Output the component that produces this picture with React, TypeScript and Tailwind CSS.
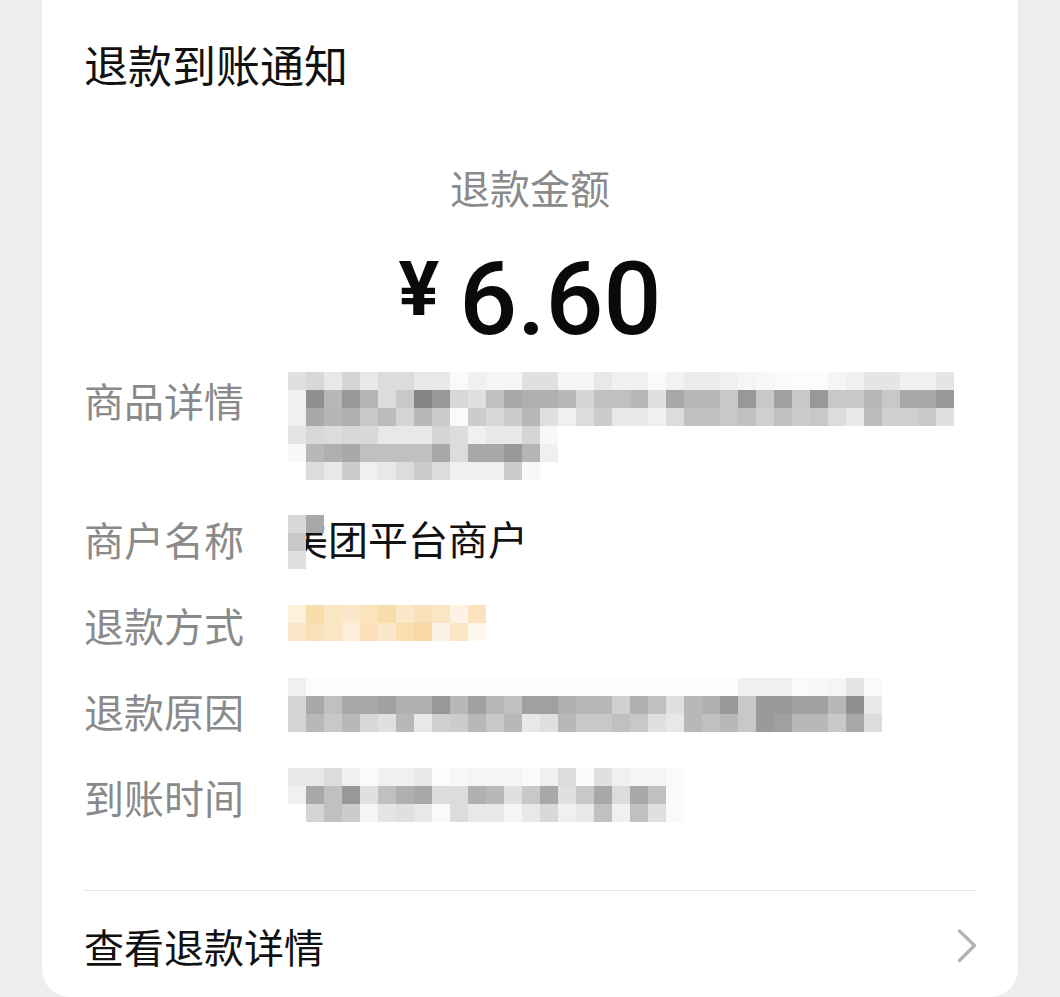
import React from 'react'

// gray levels of the pixelated (blurred) values, 18px cells
type Cell = number | string | null

const productRows: Cell[][] = [
  [0xe0, 0xd8, 0xe8, 0xd5, 0xe8, 0xdc, 0xdc, 0xe8, 0xe8, 0xfa, 0xf0, 0xf5, 0xf5, 0xe0, 0xe0, 0xf5, 0xf5, 0xe8, 0xf0, 0xf0, 0xfa, 0xf2, 0xec, 0xec, 0xf0, 0xf5, 0xf8, 0xfa, 0xfc, 0xfc, 0xf5, 0xf0, 0xe5, 0xe5, 0xf0, 0xf0, 0xe5],
  [0xf0, 0x90, 0xb8, 0x98, 0xb5, 0xdc, 0xc8, 0x85, 0x98, 0xd8, 0xe0, 0xc0, 0xa8, 0xb0, 0xb0, 0xb8, 0xd5, 0xc0, 0xc0, 0xb8, 0xe0, 0xa8, 0xb8, 0xb8, 0xc8, 0x98, 0xc8, 0xa0, 0xc8, 0x98, 0xc8, 0xc8, 0xb8, 0xc8, 0xa8, 0xa8, 0x9a],
  [0xf0, 0xa8, 0xb5, 0xb0, 0xc8, 0xbc, 0xd5, 0xb8, 0xcc, 0xfa, 0xcc, 0xd8, 0xcc, 0xb8, 0xe0, 0xf0, 0xdc, 0xcc, 0xe8, 0xe8, 0xf0, 0xdc, 0xc0, 0xc0, 0xc8, 0xc0, 0xd0, 0xc0, 0xcc, 0xc8, 0xdc, 0xe8, 0xbc, 0xd0, 0xd0, 0xc8, 0xe0],
  [0xe4, 0xd8, 0xdc, 0xd8, 0xd8, 0xe8, 0xe8, 0xe8, 0xd5, 0xdc, 0xf0, 0xe8, 0xe8, 0xd5, 0xf8],
  [0xf8, 0xb8, 0xb0, 0xa8, 0xc0, 0xc0, 0xc0, 0xc0, 0xa8, 0xdc, 0xa8, 0xa8, 0x9a, 0xb5, 0xf0],
  [null, 0xdc, 0xe8, 0xcc, 0xf0, 0xe8, 0xdc, 0xcc, 0xdc, 0xf0, 0xf0, 0xf0, 0xcc, 0xf8],
]

const methodRows: Cell[][] = [
  ['#fdf0dc', '#f8dcaa', '#fbe6c4', '#fbe8cc', '#fbe3bd', '#f8dcaa', '#fbe8c8', '#f9e0b8', '#fbe6c4', '#fdf3e4', '#fbe3bd'],
  ['#fbe8c8', '#f9e0b8', '#fbe6c4', '#fdeed8', '#f9e0b8', '#fbe8c8', '#f9deb0', '#f8d8a4', '#fdf3e4', '#fbe6c4', '#fef8ee'],
]

const reasonRows: Cell[][] = [
  [0xf0, 0xfc, 0xfc, 0xfc, 0xfc, 0xfc, 0xfc, 0xfc, 0xfc, 0xfc, 0xfc, 0xfc, 0xfc, 0xfc, 0xfc, 0xfc, 0xfc, 0xfc, 0xfc, 0xfc, 0xfc, 0xfc, 0xfc, 0xfc, 0xfc, 0xf0, 0xf0, 0xf0, 0xfa, 0xf8, 0xf5, 0xe5, 0xfa],
  [0xd5, 0xa8, 0xc0, 0xa8, 0xa8, 0xa0, 0xb0, 0xb0, 0x98, 0xb8, 0xa0, 0xb8, 0xc0, 0xa0, 0xa0, 0xb0, 0xb8, 0xb8, 0xd0, 0xb0, 0xc0, 0xe0, 0xb8, 0xb0, 0x98, 0xc8, 0x9a, 0x9a, 0xa0, 0xa0, 0xb8, 0x90, 0xe8],
  [0xd5, 0xb8, 0xc8, 0xb8, 0xd8, 0xe0, 0xb8, 0xe8, 0xd0, 0xcc, 0xb8, 0xc8, 0xb8, 0xe8, 0xe0, 0xb8, 0xc8, 0xc8, 0xc0, 0xc8, 0xe0, 0xe8, 0xb8, 0xc0, 0xb8, 0xc8, 0x9a, 0xa0, 0xb8, 0xb8, 0xc8, 0xa8, 0xdc],
]

const timeRows: Cell[][] = [
  [0xe8, 0xe8, 0xdc, 0xf0, 0xfa, 0xf0, 0xf0, 0xe8, 0xfc, 0xf8, 0xf5, 0xf5, 0xf5, 0xfa, 0xf0, 0xdc, 0xfa, 0xe0, 0xf0, 0xf5, 0xf5, 0xfa],
  [0xf0, 0xa8, 0xc0, 0x98, 0xe0, 0xc0, 0xb0, 0xa8, 0xdc, 0xdc, 0xb0, 0xb8, 0xe0, 0xc8, 0xa8, 0xe0, 0xc8, 0xa8, 0xdc, 0xa8, 0xc0, 0xfa],
  [null, 0xd5, 0xc0, 0xcc, 0xf5, 0xe5, 0xe0, 0xe8, 0xfa, 0xdc, 0xe8, 0xe8, 0xf5, 0xe8, 0xd8, 0xf0, 0xe8, 0xc0, 0xf0, 0xc0, 0xe0, 0xfa],
]

const toColor = (v: Cell) => {
  if (v === null) return 'transparent'
  if (typeof v === 'string') return v
  return `rgb(${v}, ${v}, ${v})`
}

function Mosaic({ rows, className }: { rows: Cell[][]; className?: string }) {
  return (
    <div className={className}>
      {rows.map((row, i) => (
        <div key={i} className="flex">
          {row.map((v, j) => (
            <div key={j} className="h-[18px] w-[18px] shrink-0" style={{ background: toColor(v) }} />
          ))}
        </div>
      ))}
    </div>
  )
}

function Row({ label, children }: { label: string; children: React.ReactNode }) {
  return (
    <div className="flex">
      <div className="w-[204px] shrink-0 text-[40px] leading-[54px] text-[#8a8a8a]">{label}</div>
      <div className="relative min-h-[54px] flex-1">{children}</div>
    </div>
  )
}

export default function App() {
  return (
    <div className="h-[997px] overflow-hidden bg-[#ededed] px-[42px] font-['Noto_Sans_CJK_SC','Noto_Sans',sans-serif]">
      <div className="flex h-full flex-col rounded-b-[28px] bg-white px-[42px] pt-[42px]">
        {/* Header */}
        <h1 className="text-[44px] font-normal leading-[44px] text-[#111]">退款到账通知</h1>

        <div className="mt-[81px] text-center text-[40px] leading-[40px] text-[#8a8a8a]">退款金额</div>

        <div className="mt-[41px] flex items-center justify-center text-[#0a0a0a]">
          <span className="mb-[20px] font-['Roboto',sans-serif] text-[76px] font-bold leading-none">¥</span>
          <span className="ml-[20px] font-['Roboto',sans-serif] text-[102px] font-medium leading-none">6.60</span>
        </div>

        {/* Details */}
        <div className="mt-[23px] flex flex-col gap-[32px]">
          <Row label="商品详情">
            <Mosaic rows={productRows} className="-mt-[1px]" />
          </Row>
          <Row label="商户名称">
            <div className="-mt-[1px] text-[40px] leading-[54px] text-[#111]">美团平台商户</div>
            <div className="absolute left-0 top-[3px] flex">
              <div className="flex flex-col">
                <div className="h-[18px] w-[18px] bg-[#d8d8d8]" />
                <div className="h-[18px] w-[18px] bg-[#c8c8c8]" />
                <div className="h-[18px] w-[18px] bg-[#e0e0e0]" />
              </div>
              <div className="h-[18px] w-[18px] bg-[#a8a8a8]" />
            </div>
          </Row>
          <Row label="退款方式">
            <Mosaic rows={methodRows} className="mt-[7px]" />
          </Row>
          <Row label="退款原因">
            <Mosaic rows={reasonRows} className="-mt-[6px]" />
          </Row>
          <Row label="到账时间">
            <Mosaic rows={timeRows} className="-mt-[2px]" />
          </Row>
        </div>

        {/* Footer link */}
        <div className="mt-[66px] border-t border-[#e6e6e6]">
          <div className="flex items-center justify-between pt-[35px]">
            <span className="text-[40px] leading-[40px] text-[#111]">查看退款详情</span>
            <svg width="20" height="34" viewBox="0 0 20 34" fill="none" className="mr-[-1px]">
              <path d="M2.5 2L17.5 16.5L2.5 31.5" stroke="#b3b3b3" strokeWidth="3.2" strokeLinecap="round" strokeLinejoin="round" />
            </svg>
          </div>
        </div>
      </div>
    </div>
  )
}
